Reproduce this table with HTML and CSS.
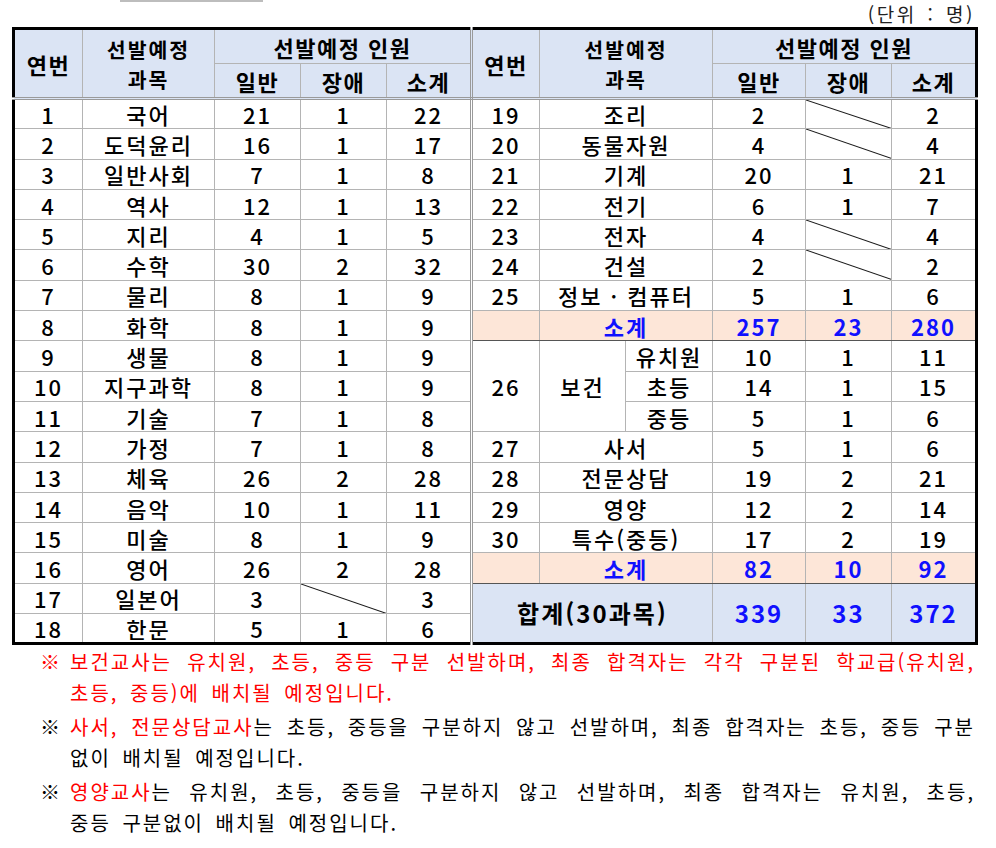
FILE: index.html
```html
<!DOCTYPE html>
<html lang="ko">
<head>
<meta charset="utf-8">
<title>선발예정 인원</title>
<link rel="stylesheet" href="styles.css">
</head>
<body>
<div class="page">
  <div class="topbar">
    <div class="topline"></div>
    <div class="unit">(단위 : 명)</div>
  </div>
  <table class="grid">
    <colgroup>
      <col class="c-no"><col class="c-subj"><col class="c-n"><col class="c-n"><col class="c-s">
      <col class="c-no2"><col class="c-sa"><col class="c-sb"><col class="c-n2"><col class="c-n"><col class="c-s2">
    </colgroup>
    <thead>
      <tr class="h1">
        <th rowspan="2">연번</th>
        <th rowspan="2" class="two"><span>선발예정</span><span>과목</span></th>
        <th colspan="3">선발예정 인원</th>
        <th rowspan="2" class="sep">연번</th>
        <th rowspan="2" colspan="2" class="two"><span>선발예정</span><span>과목</span></th>
        <th colspan="3">선발예정 인원</th>
      </tr>
      <tr class="h2">
        <th>일반</th><th>장애</th><th>소계</th>
        <th>일반</th><th>장애</th><th>소계</th>
      </tr>
    </thead>
    <tbody>
      <tr><td>1</td><td>국어</td><td>21</td><td>1</td><td>22</td>
          <td class="sep">19</td><td colspan="2">조리</td><td>2</td><td class="diag"><svg class="slash" viewBox="0 0 100 100" preserveAspectRatio="none"><line x1="0" y1="0" x2="100" y2="100"/></svg></td><td>2</td></tr>
      <tr><td>2</td><td>도덕윤리</td><td>16</td><td>1</td><td>17</td>
          <td class="sep">20</td><td colspan="2">동물자원</td><td>4</td><td class="diag"><svg class="slash" viewBox="0 0 100 100" preserveAspectRatio="none"><line x1="0" y1="0" x2="100" y2="100"/></svg></td><td>4</td></tr>
      <tr><td>3</td><td>일반사회</td><td>7</td><td>1</td><td>8</td>
          <td class="sep">21</td><td colspan="2">기계</td><td>20</td><td>1</td><td>21</td></tr>
      <tr><td>4</td><td>역사</td><td>12</td><td>1</td><td>13</td>
          <td class="sep">22</td><td colspan="2">전기</td><td>6</td><td>1</td><td>7</td></tr>
      <tr><td>5</td><td>지리</td><td>4</td><td>1</td><td>5</td>
          <td class="sep">23</td><td colspan="2">전자</td><td>4</td><td class="diag"><svg class="slash" viewBox="0 0 100 100" preserveAspectRatio="none"><line x1="0" y1="0" x2="100" y2="100"/></svg></td><td>4</td></tr>
      <tr><td>6</td><td>수학</td><td>30</td><td>2</td><td>32</td>
          <td class="sep">24</td><td colspan="2">건설</td><td>2</td><td class="diag"><svg class="slash" viewBox="0 0 100 100" preserveAspectRatio="none"><line x1="0" y1="0" x2="100" y2="100"/></svg></td><td>2</td></tr>
      <tr><td>7</td><td>물리</td><td>8</td><td>1</td><td>9</td>
          <td class="sep">25</td><td colspan="2">정보 · 컴퓨터</td><td>5</td><td>1</td><td>6</td></tr>
      <tr><td>8</td><td>화학</td><td>8</td><td>1</td><td>9</td>
          <td class="sep sub"></td><td colspan="2" class="sub blue">소계</td><td class="sub blue">257</td><td class="sub blue">23</td><td class="sub blue">280</td></tr>
      <tr><td>9</td><td>생물</td><td>8</td><td>1</td><td>9</td>
          <td class="sep" rowspan="3">26</td><td rowspan="3">보건</td><td>유치원</td><td>10</td><td>1</td><td>11</td></tr>
      <tr><td>10</td><td>지구과학</td><td>8</td><td>1</td><td>9</td>
          <td>초등</td><td>14</td><td>1</td><td>15</td></tr>
      <tr><td>11</td><td>기술</td><td>7</td><td>1</td><td>8</td>
          <td>중등</td><td>5</td><td>1</td><td>6</td></tr>
      <tr><td>12</td><td>가정</td><td>7</td><td>1</td><td>8</td>
          <td class="sep">27</td><td colspan="2">사서</td><td>5</td><td>1</td><td>6</td></tr>
      <tr><td>13</td><td>체육</td><td>26</td><td>2</td><td>28</td>
          <td class="sep">28</td><td colspan="2">전문상담</td><td>19</td><td>2</td><td>21</td></tr>
      <tr><td>14</td><td>음악</td><td>10</td><td>1</td><td>11</td>
          <td class="sep">29</td><td colspan="2">영양</td><td>12</td><td>2</td><td>14</td></tr>
      <tr><td>15</td><td>미술</td><td>8</td><td>1</td><td>9</td>
          <td class="sep">30</td><td colspan="2">특수(중등)</td><td>17</td><td>2</td><td>19</td></tr>
      <tr><td>16</td><td>영어</td><td>26</td><td>2</td><td>28</td>
          <td class="sep sub"></td><td colspan="2" class="sub blue">소계</td><td class="sub blue">82</td><td class="sub blue">10</td><td class="sub blue">92</td></tr>
      <tr><td>17</td><td>일본어</td><td>3</td><td class="diag"><svg class="slash" viewBox="0 0 100 100" preserveAspectRatio="none"><line x1="0" y1="0" x2="100" y2="100"/></svg></td><td>3</td>
          <td class="sep total" colspan="3" rowspan="2">합계(30과목)</td><td class="total blue" rowspan="2">339</td><td class="total blue" rowspan="2">33</td><td class="total blue" rowspan="2">372</td></tr>
      <tr><td>18</td><td>한문</td><td>5</td><td>1</td><td>6</td></tr>
    </tbody>
  </table>
  <div class="notes">
    <div class="note red">
      <span class="mark">※</span>
      <div class="text">
        <span class="line">보건교사는 유치원, 초등, 중등 구분 선발하며, 최종 합격자는 각각 구분된 학교급(유치원,</span>
        <span class="last">초등, 중등)에 배치될 예정입니다.</span>
      </div>
    </div>
    <div class="note">
      <span class="mark">※</span>
      <div class="text">
        <span class="line"><span class="red">사서, 전문상담교사</span>는 초등, 중등을 구분하지 않고 선발하며, 최종 합격자는 초등, 중등 구분</span>
        <span class="last">없이 배치될 예정입니다.</span>
      </div>
    </div>
    <div class="note">
      <span class="mark">※</span>
      <div class="text">
        <span class="line"><span class="red">영양교사</span>는 유치원, 초등, 중등을 구분하지 않고 선발하며, 최종 합격자는 유치원, 초등,</span>
        <span class="last">중등 구분없이 배치될 예정입니다.</span>
      </div>
    </div>
  </div>
</div>
</body>
</html>
```

FILE: styles.css
```css
* { box-sizing: border-box; }

body {
  margin: 0;
  background: #ffffff;
  color: #000000;
  font-family: "Noto Sans CJK KR", "Noto Sans", sans-serif;
}

.page {
  width: 996px;
  padding-left: 12px;
}

.topbar {
  display: flex;
  justify-content: space-between;
  align-items: flex-start;
  height: 27px;
  padding-right: 21px;
}

.topline {
  margin-left: 108px;
  width: 143px;
  height: 2px;
  background: #bdbdbd;
}

.unit {
  font-size: 19px;
  line-height: 28px;
  letter-spacing: 2.5px;
  word-spacing: 3px;
  color: #222222;
}

.grid {
  border-collapse: collapse;
  table-layout: fixed;
  width: 966px;
  border: 3px solid #000000;
}

.c-no { width: 69px; }
.c-subj { width: 132px; }
.c-n { width: 86px; }
.c-s { width: 85px; }
.c-no2 { width: 68px; }
.c-sa { width: 86px; }
.c-sb { width: 87px; }
.c-n2 { width: 93px; }
.c-s2 { width: 85px; }

.grid th,
.grid td {
  border: 1px solid #b4b4b4;
  padding: 0;
  text-align: center;
  vertical-align: middle;
  white-space: nowrap;
}

.grid th {
  background: #dbe4f4;
  font-weight: 700;
  font-size: 22px;
  letter-spacing: 1.5px;
  line-height: 28px;
}

.grid th.two span {
  display: block;
  font-size: 20.5px;
  letter-spacing: 2px;
  line-height: 30px;
}

.grid tr.h1 { height: 35px; }
.grid tr.h2 { height: 35px; }
.grid tr.h2 th { border-bottom: 3px double #9a9a9a; }
.grid tr.h1 th[rowspan] { border-bottom: 3px double #9a9a9a; }

.grid td {
  font-size: 22px;
  font-weight: 500;
  letter-spacing: 2px;
  line-height: 1;
}

.grid tbody tr { height: 30.3px; }

.grid .sep { border-left: 3px double #9a9a9a; }

.grid td.sub {
  background: #fde6d8;
  border-top: 1px solid #555555;
  border-bottom: 1px solid #555555;
}

.grid td.total {
  background: #dbe4f4;
  border-top: 1px solid #555555;
  font-weight: 700;
  font-size: 24px;
}

.blue {
  color: #1010ff;
  font-weight: 700;
}

.grid td.blue { font-weight: 700; }

.grid td.diag {
  position: relative;
}

.slash {
  position: absolute;
  left: 0;
  top: 0;
  width: 100%;
  height: 100%;
  display: block;
}

.slash line {
  stroke: #1a1a1a;
  stroke-width: 1;
  vector-effect: non-scaling-stroke;
}

.notes {
  width: 975px;
  padding-left: 28px;
  padding-top: 1px;
}

.note {
  display: flex;
  font-size: 20px;
  line-height: 31px;
  letter-spacing: 2px;
  margin-bottom: 3px;
}

.mark {
  flex: none;
  width: 30px;
  letter-spacing: 0;
}

.text {
  width: 905px;
}

.text .line {
  display: block;
  text-align: justify;
  text-align-last: justify;
}

.text .last {
  display: block;
  word-spacing: 4px;
}

.red { color: #ff0000; }
```
